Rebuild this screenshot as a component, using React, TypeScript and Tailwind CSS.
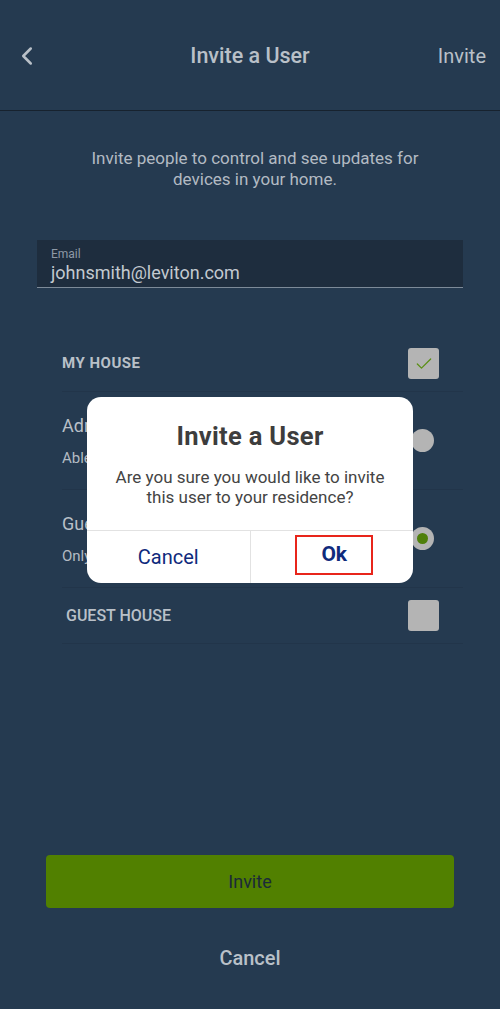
import { ChevronLeft, Check } from "lucide-react"

function Checkbox({ checked }: { checked: boolean }) {
  return (
    <div className="w-[31px] h-[31px] rounded-[3px] bg-[#b4b4b4] flex items-center justify-center">
      {checked ? <Check size={20} strokeWidth={1.5} color="#5a8f14" /> : null}
    </div>
  )
}

function Radio({ on }: { on: boolean }) {
  return (
    <div className="w-[23px] h-[23px] rounded-full bg-[#b4b4b4] flex items-center justify-center">
      {on ? <div className="w-[11px] h-[11px] rounded-full bg-[#4f7f0a]" /> : null}
    </div>
  )
}

function App() {
  return (
    <main
      className="relative w-full h-[1009px] bg-[#253a50] flex flex-col overflow-hidden"
      style={{ fontFamily: "Roboto, 'Liberation Sans', sans-serif" }}
    >
      <header className="h-[111px] shrink-0 border-b border-[#17222e] flex items-center px-[20px] pt-[2px] relative">
        <ChevronLeft size={30} strokeWidth={2} color="#b9c0c8" className="-ml-[8px]" />
        <h1 className="absolute left-0 right-0 text-center text-[21.5px] font-medium text-[#b9c0c8] pointer-events-none">
          Invite a User
        </h1>
        <span className="ml-auto text-[20px] text-[#b9c0c8] -mr-[6px]">Invite</span>
      </header>

      <p className="mt-[37px] ml-[80px] w-[350px] text-center text-[17px] leading-[21px] text-[#b3bac3]">
        Invite people to control and see updates for devices in your home.
      </p>

      <div className="mt-[50px] mx-[37px] h-[48px] bg-[#1e2d3e] border-b border-[#7d8a98] px-[14px] pt-[7px]">
        <div className="text-[12px] leading-[14px] text-[#8e99a6]">Email</div>
        <div className="text-[18px] leading-[24px] text-[#c3c9d0]">johnsmith@leviton.com</div>
      </div>

      <div className="mt-[48px] ml-[62px] mr-[37px] flex flex-col">
        <div className="h-[56px] border-b border-[#22354a] flex items-center justify-between pr-[24px]">
          <span className="text-[15px] font-bold tracking-[0.5px] text-[#b9c0c8]">MY HOUSE</span>
          <Checkbox checked />
        </div>
        <div className="h-[98px] border-b border-[#22354a] flex items-center justify-between pr-[29px]">
          <div className="flex flex-col gap-[8px]">
            <span className="text-[18px] text-[#b9c0c8]">Admin</span>
            <span className="text-[15px] text-[#b3bac3]">Able to control all devices</span>
          </div>
          <Radio on={false} />
        </div>
        <div className="h-[98px] border-b border-[#22354a] flex items-center justify-between pr-[29px]">
          <div className="flex flex-col gap-[8px]">
            <span className="text-[18px] text-[#b9c0c8]">Guest</span>
            <span className="text-[15px] text-[#b3bac3]">Only able to control devices</span>
          </div>
          <Radio on />
        </div>
        <div className="h-[56px] border-b border-[#22354a] flex items-center justify-between pl-[4px] pr-[24px]">
          <span className="text-[16px] font-medium text-[#b9c0c8]">GUEST HOUSE</span>
          <Checkbox checked={false} />
        </div>
      </div>

      <button className="mt-[211px] mx-[46px] h-[53px] rounded-[4px] bg-[#518000] text-[18px] text-[#1b2a3a]">
        Invite
      </button>
      <button className="mt-[35px] mx-auto text-[20px] font-medium text-[#b9c0c8]">Cancel</button>

      <div className="absolute left-[87px] top-[397px] w-[326px] h-[186px] bg-white rounded-[14px] flex flex-col overflow-hidden">
        <h2 className="mt-[24px] text-center text-[25.5px] leading-[30px] font-bold text-[#3d3d3d] tracking-[0.3px]">Invite a User</h2>
        <p className="mt-[16px] px-[28px] text-center text-[17px] leading-[20px] text-[#444]">
          Are you sure you would like to invite this user to your residence?
        </p>
        <div className="mt-auto h-[53px] border-t border-[#e2e2e2] flex">
          <div className="flex-1 flex items-center justify-center text-[20px] text-[#0f2a7c] border-r border-[#e2e2e2]">
            Cancel
          </div>
          <div className="flex-1 flex items-center justify-center pb-[4px]">
            <span className="w-[78px] h-[40px] border-2 border-[#e8251b] flex items-center justify-center text-[21px] font-bold text-[#0f2a7c] ml-[5px]">
              Ok
            </span>
          </div>
        </div>
      </div>
    </main>
  )
}

export default App
